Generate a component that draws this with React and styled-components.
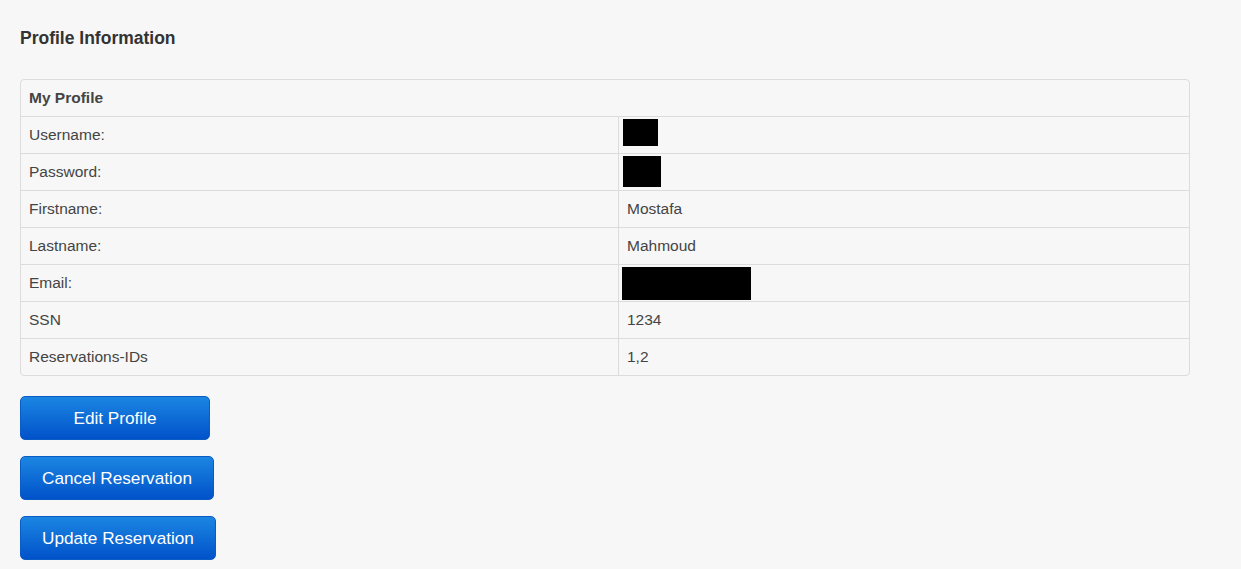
import React from 'react';
import styled, { createGlobalStyle } from 'styled-components';

const GlobalStyle = createGlobalStyle`
  body {
    margin: 0;
    background: #f7f7f7;
    font-family: "Liberation Sans", Arial, sans-serif;
    color: #333;
  }
`;

const Page = styled.div`
  padding: 28px 51px 0 20px;
`;

const Title = styled.h3`
  margin: 0 0 31px;
  font-size: 17.5px;
  font-weight: bold;
  line-height: 20px;
  color: #333;
`;

const Table = styled.table`
  width: 1170px;
  border-collapse: separate;
  border-spacing: 0;
  border: 1px solid #dcdcdc;
  border-radius: 4px;
  font-size: 15.5px;
`;

const Cell = styled.td`
  height: 36px;
  padding: 0 8px;
  border-top: ${p => (p.$first ? 'none' : '1px solid #dcdcdc')};
  border-left: ${p => (p.$value ? '1px solid #dcdcdc' : 'none')};
  color: #444;
  font-weight: ${p => (p.$head ? 'bold' : 'normal')};
  width: ${p => (p.$value ? '554px' : 'auto')};
  vertical-align: middle;
`;

const Redacted = styled.div`
  background: #000;
  width: ${p => p.$w}px;
  height: ${p => p.$h}px;
  margin: ${p => p.$dy || 0}px 0 ${p => -(p.$dy || 0)}px ${p => p.$ml || -4}px;
`;

const Actions = styled.div`
  display: flex;
  flex-direction: column;
  align-items: flex-start;
  gap: 16px;
  margin-top: 20px;
`;

const Button = styled.button`
  height: 44px;
  min-width: 190px;
  padding: 0 21px;
  border: 1px solid #0a5bc4;
  border-radius: 5px;
  background: linear-gradient(to bottom, #1b86e2, #0152c9);
  color: #fff;
  font-family: "Liberation Sans", Arial, sans-serif;
  font-size: 17.2px;
  cursor: pointer;
`;

const rows = [
  ['Username:', <Redacted $w={35} $h={27} $dy={-3} />],
  ['Password:', <Redacted $w={38} $h={31} $dy={-1} />],
  ['Firstname:', 'Mostafa'],
  ['Lastname:', 'Mahmoud'],
  ['Email:', <Redacted $w={129} $h={33} $ml={-5} />],
  ['SSN', '1234'],
  ['Reservations-IDs', '1,2'],
];

export default function App() {
  return (
    <Page>
      <GlobalStyle />
      <Title>Profile Information</Title>
      <Table>
        <tbody>
          <tr>
            <Cell $first $head colSpan={2}>My Profile</Cell>
          </tr>
          {rows.map(([label, value]) => (
            <tr key={label}>
              <Cell>{label}</Cell>
              <Cell $value>{value}</Cell>
            </tr>
          ))}
        </tbody>
      </Table>
      <Actions>
        <Button>Edit Profile</Button>
        <Button>Cancel Reservation</Button>
        <Button>Update Reservation</Button>
      </Actions>
    </Page>
  );
}
